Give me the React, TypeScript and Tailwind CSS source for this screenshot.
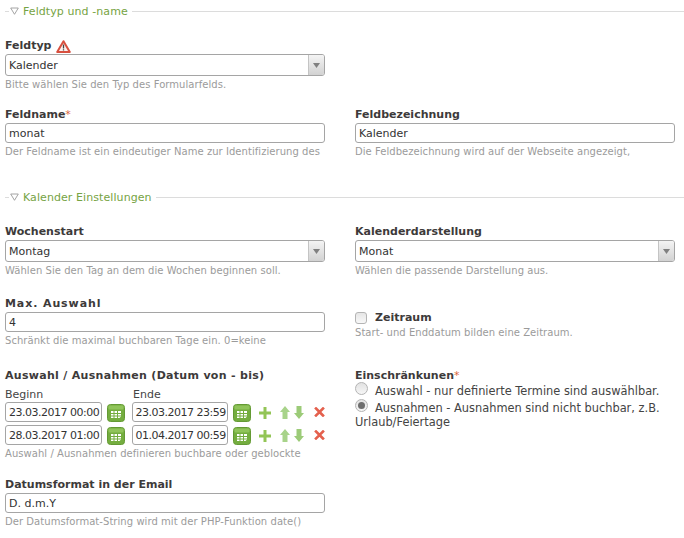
import { ReactNode } from "react";

function Legend({ title, className }: { title: string; className: string }) {
  return (
    <div className={`flex items-center h-4 ${className}`}>
      <div className="w-[4px] h-px bg-[#dcdcdc] ml-[5px]" />
      <svg width="9" height="8" viewBox="0 0 9 8" className="ml-px">
        <path d="M0.7 1h7.6L4.5 7.3z" fill="none" stroke="#9a9a9a" strokeWidth="0.9" />
      </svg>
      <span className="ml-[4px] h-4 text-[11px] leading-[18px] tracking-[0.08px] text-[#76a343]">{title}</span>
      <div className="flex-1 h-px bg-[#dcdcdc] ml-[4px]" />
    </div>
  );
}

function Label({ children, className = "" }: { children: ReactNode; className?: string }) {
  return <div className={`h-4 mb-px text-[11px] leading-[18px] font-bold text-[#3d3a3a] whitespace-nowrap ${className}`}>{children}</div>;
}

function Help({ children }: { children: ReactNode }) {
  return <div className="h-[14px] mt-px text-[10px] leading-4 tracking-[0.05px] whitespace-nowrap text-[#9b9b9b]">{children}</div>;
}

function Select({ value }: { value: string }) {
  return (
    <div className="flex h-[22px] w-[320px] border border-[#a5a5a5] rounded-[3px] bg-white overflow-hidden">
      <div className="flex-1 pl-[3px] text-[11px] leading-[22px] text-[#333]">{value}</div>
      <div className="flex items-center justify-center w-[16px] border-l border-[#c4c4c4] bg-gradient-to-b from-[#f4f4f4] to-[#d2d2d2]">
        <svg width="7" height="5" viewBox="0 0 7 5">
          <path d="M0 0h7L3.5 5z" fill="#808080" />
        </svg>
      </div>
    </div>
  );
}

function Input({ value, className = "w-[320px]" }: { value: string; className?: string }) {
  return (
    <div className={`h-5 border border-[#a5a5a5] rounded-[3px] bg-white pl-[3px] text-[11px] leading-5 text-[#333] whitespace-nowrap overflow-hidden ${className}`}>
      {value}
    </div>
  );
}

function CalendarButton() {
  return (
    <svg width="18" height="18" viewBox="0 0 18 18" className="shrink-0 mt-[2px]">
      <rect x="0.5" y="0.5" width="17" height="17" rx="3" fill="#74ad3f" stroke="#649a34" />
      <rect x="1.5" y="1.5" width="15" height="4" rx="1" fill="#90c45a" />
      <path d="M4 7h10v5.5L12.5 14H4z" fill="#fff" />
      <path d="M4 9.5h10M4 12h10M7 7v7M10.5 7v7" stroke="#74ad3f" strokeWidth="1" />
    </svg>
  );
}

function PlusIcon() {
  return (
    <svg width="12" height="12" viewBox="0 0 12 12">
      <path d="M4.5 0h3v4.5H12v3H7.5V12h-3V7.5H0v-3h4.5z" fill="#93c556" />
    </svg>
  );
}

function ArrowIcon({ down }: { down?: boolean }) {
  return (
    <svg width="10" height="13" viewBox="0 0 10 13" className={down ? "rotate-180" : ""}>
      <path d="M5 0l5 6H7.5v7h-5V6H0z" fill={down ? "#9ccb78" : "#a8d38a"} />
    </svg>
  );
}

function RemoveIcon() {
  return (
    <svg width="11" height="10" viewBox="0 0 11 10">
      <path d="M2 1.5l7 7M9 1.5l-7 7" stroke="#e4604d" strokeWidth="2.6" strokeLinecap="square" fill="none" />
    </svg>
  );
}

function DateRow({ from, to, className = "" }: { from: string; to: string; className?: string }) {
  return (
    <div className={`flex items-start ${className}`}>
      <Input value={from} className="w-[98px] tracking-[-0.5px]" />
      <div className="ml-[5px]"><CalendarButton /></div>
      <Input value={to} className="w-[98px] ml-[7px] tracking-[-0.5px]" />
      <div className="ml-[5px]"><CalendarButton /></div>
      <div className="ml-[8px] mt-[5px]"><PlusIcon /></div>
      <div className="ml-[9px] mt-[4px]"><ArrowIcon /></div>
      <div className="ml-[4px] mt-[4px]"><ArrowIcon down /></div>
      <div className="ml-[10px] mt-[5px]"><RemoveIcon /></div>
    </div>
  );
}

function Radio({ checked }: { checked?: boolean }) {
  return (
    <span className="inline-flex items-center justify-center w-[13px] h-[13px] -mt-[2px] rounded-full border border-[#b4b4b4] bg-gradient-to-b from-[#e2e2e2] to-[#f6f6f6] shrink-0">
      {checked && <span className="w-[7px] h-[7px] rounded-full bg-[#6e6e6e]" />}
    </span>
  );
}

export default function App() {
  return (
    <div className="w-[684px] h-[538px] bg-white overflow-hidden font-['DejaVu_Sans',sans-serif]">
      <Legend title="Feldtyp und -name" className="mt-[3px]" />

      <div className="grid grid-cols-[320px_320px] gap-x-[30px] pl-[5px] pt-[18px]">
        <div>
          <Label>
            <span className="flex items-center gap-[5px]">
              Feldtyp
              <svg width="15" height="13" viewBox="0 0 15 13">
                <path d="M7.5 1.2L13.8 12H1.2z" fill="#fdf1ee" stroke="#d8503f" strokeWidth="2" strokeLinejoin="round" />
                <path d="M7.5 4.5v4M7.5 9.2v1.2" stroke="#444" strokeWidth="1.3" />
              </svg>
            </span>
          </Label>
          <Select value="Kalender" />
          <Help>Bitte wählen Sie den Typ des Formularfelds.</Help>
        </div>
        <div />

        <div className="mt-[15px]">
          <Label>Feldname<span className="font-normal text-[#d9663c]">*</span></Label>
          <Input value="monat" />
          <Help>Der Feldname ist ein eindeutiger Name zur Identifizierung des</Help>
        </div>
        <div className="mt-[15px]">
          <Label>Feldbezeichnung</Label>
          <Input value="Kalender" />
          <Help>Die Feldbezeichnung wird auf der Webseite angezeigt,</Help>
        </div>
      </div>

      <Legend title="Kalender Einstellungen" className="mt-[31px]" />

      <div className="grid grid-cols-[320px_320px] gap-x-[30px] pl-[5px] pt-[18px]">
        <div>
          <Label>Wochenstart</Label>
          <Select value="Montag" />
          <Help>Wählen Sie den Tag an dem die Wochen beginnen soll.</Help>
        </div>
        <div>
          <Label>Kalenderdarstellung</Label>
          <Select value="Monat" />
          <Help>Wählen die passende Darstellung aus.</Help>
        </div>

        <div className="mt-[18px]">
          <Label className="tracking-[0.9px]">Max. Auswahl</Label>
          <Input value="4" />
          <Help>Schränkt die maximal buchbaren Tage ein. 0=keine</Help>
        </div>
        <div className="mt-[33px]">
          <div className="flex items-center h-4 -mb-[2px] text-[11px] font-bold text-[#3d3a3a]">
            <span className="w-[12px] h-[12px] rounded-[3px] border border-[#b4b4b4] bg-gradient-to-b from-[#e6e6e6] to-[#f8f8f8] mr-[8px]" />
            Zeitraum
          </div>
          <Help>Start- und Enddatum bilden eine Zeitraum.</Help>
        </div>

        <div className="mt-[20px]">
          <Label className="tracking-[0.3px]">Auswahl / Ausnahmen (Datum von - bis)</Label>
          <div className="flex h-4 mt-[3px] text-[11px] leading-[18px] text-[#444]">
            <span className="w-[128px]">Beginn</span>
            <span>Ende</span>
          </div>
          <DateRow from="23.03.2017 00:00" to="23.03.2017 23:59" className="h-[23px]" />
          <DateRow from="28.03.2017 01:00" to="01.04.2017 00:59" className="h-[20px]" />
          <Help>Auswahl / Ausnahmen definieren buchbare oder geblockte</Help>
        </div>
        <div className="mt-[20px] text-[11.4px] leading-[14px] text-[#444]">
          <Label>Einschränkunen<span className="font-normal text-[#d9663c]">*</span></Label>
          <div className="flex items-start h-[17px]">
            <Radio />
            <span className="ml-[7px]">Auswahl - nur definierte Termine sind auswählbar.</span>
          </div>
          <div className="flex items-start h-[14px]">
            <Radio checked />
            <span className="ml-[7px]">Ausnahmen - Ausnahmen sind nicht buchbar, z.B.</span>
          </div>
          <div>Urlaub/Feiertage</div>
        </div>

        <div className="mt-[16px]">
          <Label>Datumsformat in der Email</Label>
          <Input value="D. d.m.Y" />
          <Help>Der Datumsformat-String wird mit der PHP-Funktion date()</Help>
        </div>
        <div />
      </div>
    </div>
  );
}
